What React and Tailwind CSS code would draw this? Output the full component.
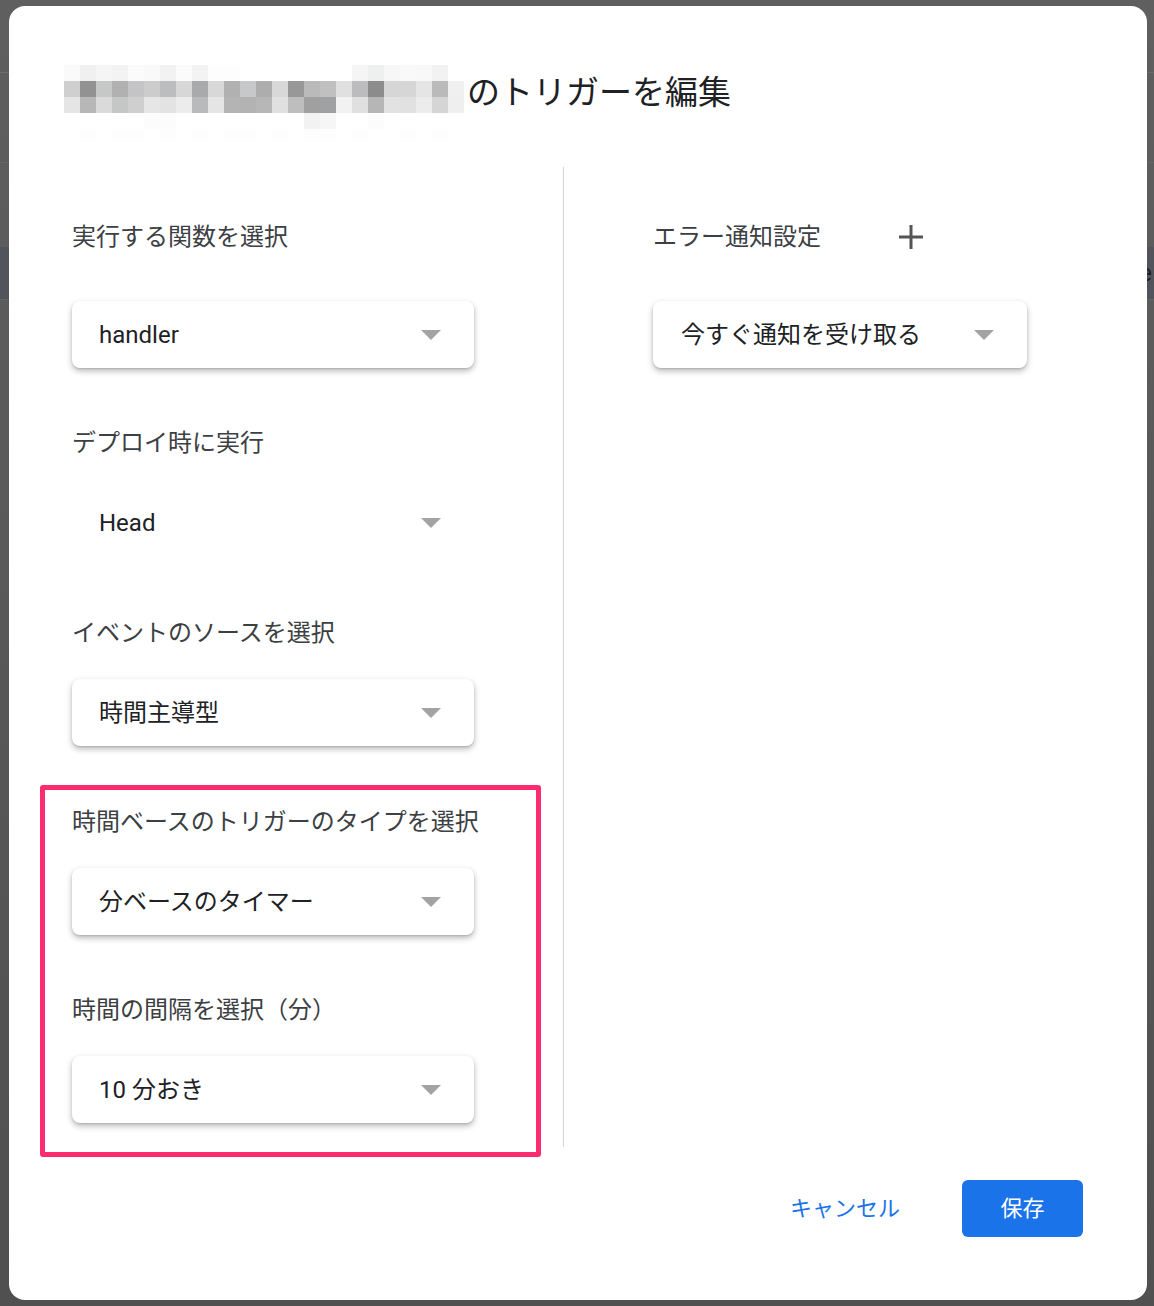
import React from 'react';

const font = { fontFamily: 'Roboto, "Noto Sans CJK JP", sans-serif' };

// blurred (pixelated) script name in the title, 25 columns x 5 rows of 16px blocks
const mosaic = [
  ['#fafafa','#f0f0f0','#f5f5f5','#f3f3f3','#fbfbfb','#f9f9f9','#f2f2f2','#fbfbfb','#f3f3f3','#fdfdfd','#fdfdfd','#fff','#fff','#fff','#fff','#fff','#fff','#fff','#f5f5f5','#eef0ef','#f7f7f7','#f9f9f9','#f8f8f8','#f2f2f2','#fff'],
  ['#cfcfcf','#929292','#c6c8c7','#b1b1b1','#c4c4c6','#cccccc','#bcbdbf','#d7d7d7','#a9aaab','#d8d8d8','#b1b1b1','#c7c8ca','#adadad','#d8d8d8','#989898','#bababa','#c0c0c0','#dfe0df','#bcbcbe','#8c8c8d','#d6d6d6','#d6d6d6','#e5e5e5','#bababa','#f0f0f0'],
  ['#e5e5e5','#b7b7b7','#dadada','#c5c7c6','#cfcfcf','#e6e6e6','#e3e3e3','#ececec','#b9babc','#e5e5e5','#b4b4b4','#b3b3b3','#b7b7b7','#dfe0df','#bebebe','#a0a0a0','#a0a1a2','#f2f2f2','#e0e0e0','#b6b6b6','#e2e2e2','#e1e1e1','#ececec','#d5d5d5','#efefef'],
  ['#fff','#fff','#fff','#fff','#fff','#fcfcfc','#fcfcfc','#fff','#fff','#fff','#fff','#fff','#fff','#fff','#fff','#f2f2f2','#f6f6f6','#fff','#fff','#fcfcfc','#fff','#fff','#fff','#fff','#fff'],
  ['#fff','#fdfdfd','#fff','#fdfdfd','#fdfdfd','#fff','#fdfdfd','#fff','#fdfdfd','#fff','#fdfdfd','#fdfdfd','#fff','#fdfdfd','#fff','#fdfdfd','#fdfdfd','#fff','#fdfdfd','#fff','#fff','#fdfdfd','#fff','#fdfdfd','#fff'],
];

function Mosaic() {
  return (
    <svg width="400" height="75" viewBox="0 0 400 75" className="shrink-0">
      {mosaic.map((row, r) =>
        row.map((c, i) => (
          <rect key={r + '-' + i} x={i * 16} y={r * 16} width="16" height={r === 4 ? 11 : 16} fill={c} />
        ))
      )}
    </svg>
  );
}

function Caret() {
  return (
    <svg width="20" height="10" viewBox="0 0 20 10" className="shrink-0">
      <polygon points="0,0 20,0 10,10" fill="#a3a3a3" />
    </svg>
  );
}

function Label({ children, className = '' }) {
  return <div className={`h-[36px] flex items-center text-[24px] text-[#3c4043] leading-none ${className}`}>{children}</div>;
}

function Select({ value, flat, className = '' }) {
  return (
    <div
      className={`h-[67px] w-[402px] flex items-center justify-between pl-[27px] pr-[33px] rounded-[8px] bg-white text-[24px] text-[#202124] ${
        flat ? '' : 'shadow-[0_3px_6px_rgba(0,0,0,0.28),0_1px_2px_rgba(0,0,0,0.12)]'
      } ${className}`}
    >
      <span>{value}</span>
      <Caret />
    </div>
  );
}

export default function App() {
  return (
    <div style={font} className="relative h-[1306px] w-full overflow-hidden bg-linear-to-b from-[#5f5f5f] to-[#505050]">
      {/* dimmed page behind the dialog */}
      <div className="flex flex-col">
        <div className="h-[73px] border-b border-[#6b6b6b]" />
        <div className="h-[90px] border-b border-[#666]" />
        <div className="h-[84px]" />
        <div className="h-[53px] bg-[#51545a] border-b border-[#636363] flex items-center justify-end pr-[2px] text-[24px] text-[#1f1f1f]">le</div>
      </div>

      {/* dialog */}
      <div className="absolute left-[9px] top-[6px] w-[1138px] h-[1294px] bg-white rounded-[16px] flex flex-col">
        <div className="flex items-start pl-[55px] pt-[59px]">
          <Mosaic />
          <div className="mt-[8px] ml-[3px] text-[33px] leading-[40px] text-[#202124]">のトリガーを編集</div>
        </div>

        <div className="flex mt-[27px] ml-[31px]">
          {/* left column */}
          <div className="w-[501px] flex flex-col">
            <Label className="mt-[52px] ml-[32px]">実行する関数を選択</Label>
            <Select value="handler" className="mt-[46px] ml-[32px]" />
            <Label className="mt-[57px] ml-[32px]">デプロイ時に実行</Label>
            <Select value="Head" flat className="mt-[28px] ml-[32px]" />
            <Label className="mt-[59px] ml-[32px]">イベントのソースを選択</Label>
            <Select value="時間主導型" className="mt-[28px] ml-[32px]" />

            <div className="mt-[39px] border-[5px] border-[#fe2c6e] rounded-[3px] pl-[27px] pt-[14px] pb-[29px]">
              <Label>時間ベースのトリガーのタイプを選択</Label>
              <Select value="分ベースのタイマー" className="mt-[28px]" />
              <Label className="mt-[57px]">時間の間隔を選択（分）</Label>
              <Select value="10 分おき" className="mt-[28px]" />
            </div>
          </div>

          <div className="ml-[22px] w-px h-[980px] bg-[#d4d4d4]" />

          {/* right column */}
          <div className="pl-[89px] flex flex-col">
            <div className="mt-[52px] flex items-center">
              <Label>エラー通知設定</Label>
              <svg width="24" height="24" viewBox="0 0 24 24" className="ml-[78px]">
                <path d="M12 0v24M0 12h24" stroke="#555" strokeWidth="3" />
              </svg>
            </div>
            <div className="mt-[46px] h-[67px] w-[374px] flex items-center justify-between pl-[28px] pr-[33px] rounded-[8px] bg-white text-[24px] text-[#202124] shadow-[0_3px_6px_rgba(0,0,0,0.28),0_1px_2px_rgba(0,0,0,0.12)]">
              <span>今すぐ通知を受け取る</span>
              <Caret />
            </div>
          </div>
        </div>

        <div className="mt-[23px] flex items-center justify-end pr-[64px] gap-[62px]">
          <button className="text-[22px] text-[#1a73e8] leading-none">キャンセル</button>
          <button className="h-[57px] w-[121px] rounded-[6px] bg-[#1a73e8] text-white text-[22px]">保存</button>
        </div>
      </div>
    </div>
  );
}
